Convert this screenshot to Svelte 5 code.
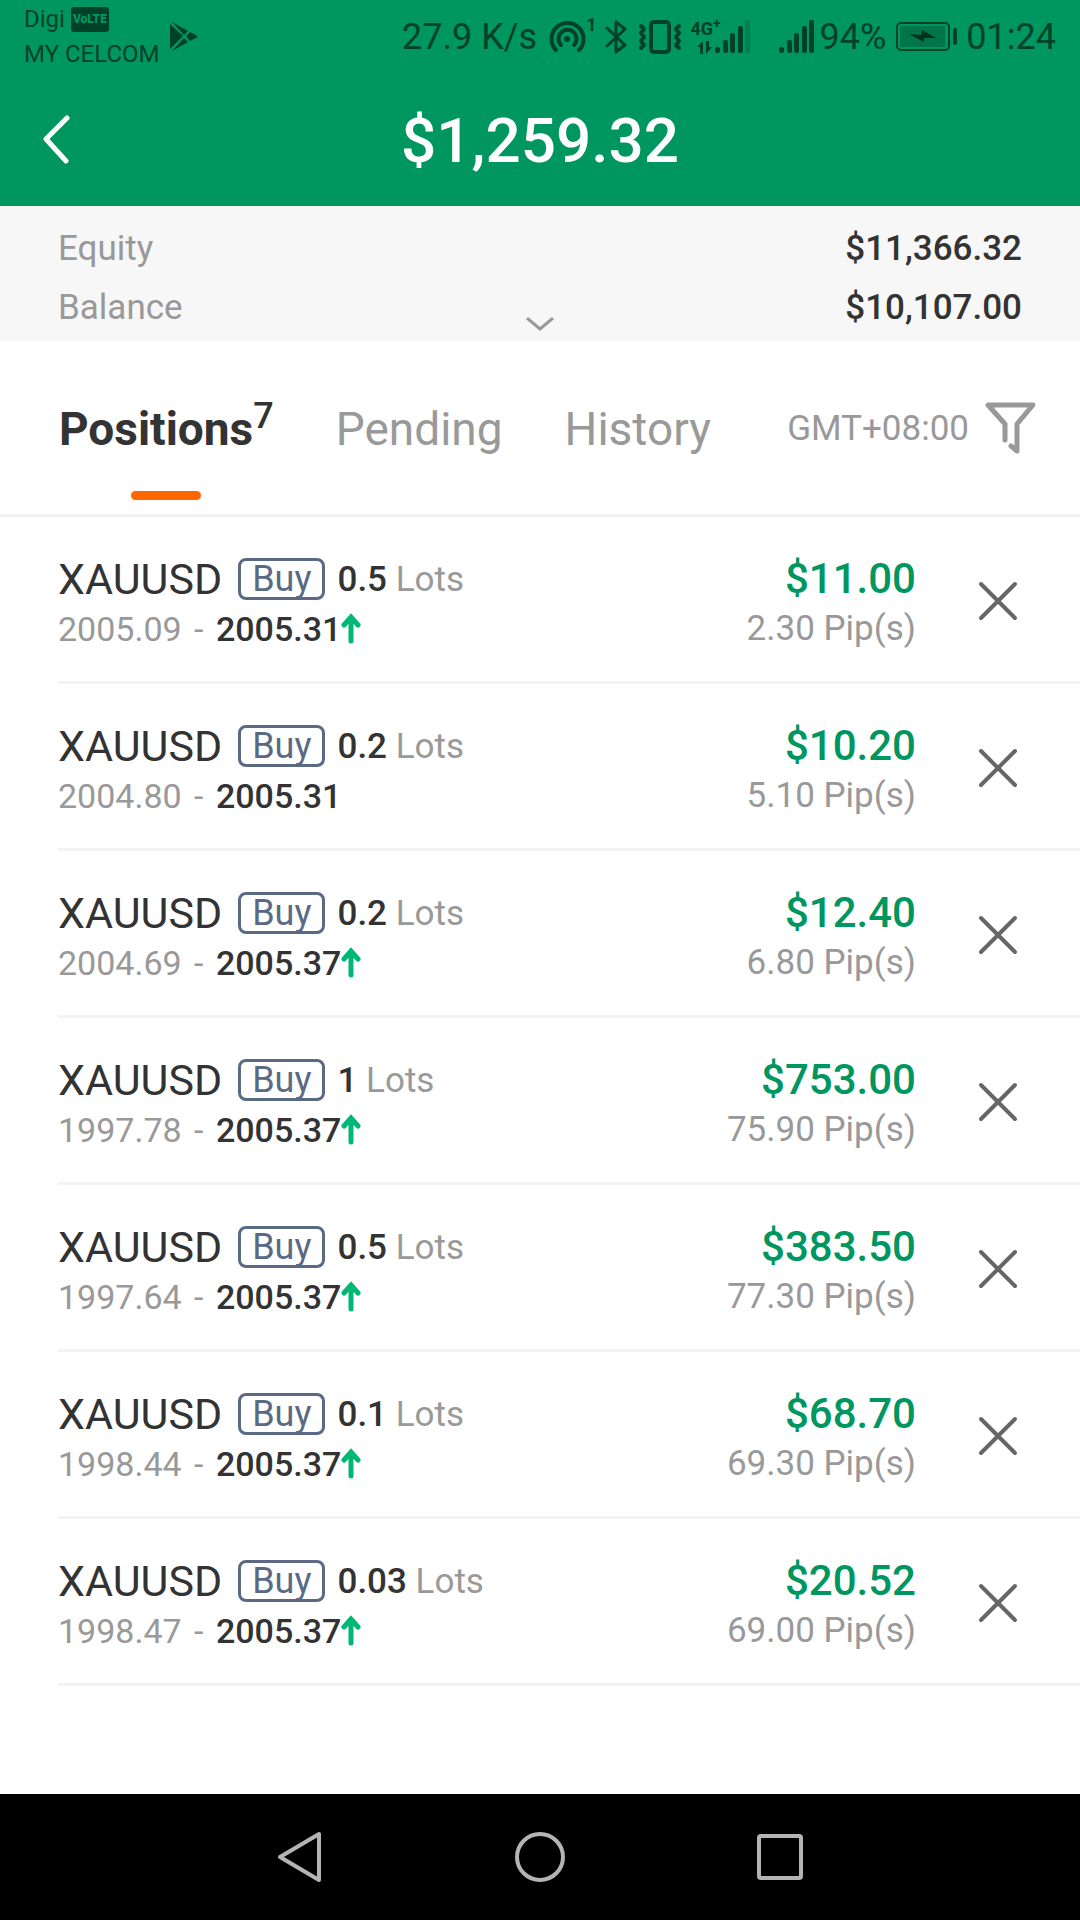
<script lang="ts">
  type Position = {
    lots: string;
    open: string;
    current: string;
    up: boolean;
    profit: string;
    pips: string;
  };

  const positions: Position[] = [
    { lots: '0.5', open: '2005.09', current: '2005.31', up: true, profit: '$11.00', pips: '2.30' },
    { lots: '0.2', open: '2004.80', current: '2005.31', up: false, profit: '$10.20', pips: '5.10' },
    { lots: '0.2', open: '2004.69', current: '2005.37', up: true, profit: '$12.40', pips: '6.80' },
    { lots: '1', open: '1997.78', current: '2005.37', up: true, profit: '$753.00', pips: '75.90' },
    { lots: '0.5', open: '1997.64', current: '2005.37', up: true, profit: '$383.50', pips: '77.30' },
    { lots: '0.1', open: '1998.44', current: '2005.37', up: true, profit: '$68.70', pips: '69.30' },
    { lots: '0.03', open: '1998.47', current: '2005.37', up: true, profit: '$20.52', pips: '69.00' }
  ];

  const tabs = ['Positions', 'Pending', 'History'];
  let active = $state('Positions');
</script>

{#snippet bars(full: boolean)}
  <svg class="bars" width="36" height="34" viewBox="0 0 36 34" aria-hidden="true">
    <rect x="0" y="27" width="5" height="6" rx="2" />
    <rect x="8" y="20" width="5" height="13" rx="2" />
    <rect x="15" y="13" width="5" height="20" rx="2" />
    <rect x="23" y="6" width="5" height="27" rx="2" />
    <rect x="30" y="0" width="5" height="33" rx="2" opacity={full ? 1 : 0.25} />
  </svg>
{/snippet}

<div class="app">
  <header>
    <div class="status">
      <div class="carriers">
        <div class="carrier">Digi <span class="volte">VoLTE</span></div>
        <div class="carrier">MY CELCOM</div>
      </div>
      <svg class="play" width="28" height="30" viewBox="0 0 28 30" aria-hidden="true">
        <path d="M0 2 13 14 0 27ZM2 0 18 9 14 13ZM20 10 26 13Q29 15 26 16L20 19 16 14ZM14 16 18 20 2 29Z" />
      </svg>
      <div class="indicators">
        <span class="speed">27.9 K/s</span>
        <svg width="37" height="34" viewBox="0 0 37 34" fill="none" stroke="currentColor" stroke-width="4" stroke-linecap="round" aria-hidden="true">
          <path d="M7 30A16 16 0 1 1 30 30M12 25A9 9 0 1 1 25 25" />
          <circle cx="18" cy="19" r="3" fill="currentColor" stroke="none" />
        </svg>
        <sup class="tiny">1</sup>
        <svg class="bt" width="22" height="36" viewBox="0 0 22 36" fill="none" stroke="currentColor" stroke-width="3" stroke-linejoin="round" stroke-linecap="round" aria-hidden="true">
          <path d="M2 9 20 26 11 33V3L20 10 2 27" />
        </svg>
        <svg class="vib" width="42" height="34" viewBox="0 0 42 34" fill="none" stroke="currentColor" stroke-linecap="round" stroke-linejoin="round" aria-hidden="true">
          <rect x="12" y="2" width="18" height="30" rx="3" stroke-width="4" />
          <path d="M2 6 5 9 2 13 5 17 2 21 5 25 2 28M40 6 37 9 40 13 37 17 40 21 37 25 40 28" stroke-width="4" />
        </svg>
        <span class="network">
          <span class="tiny">4G<sup>+</sup></span>
          <svg width="15" height="13" viewBox="0 0 15 13" aria-hidden="true">
            <path d="M3 13V6H0L6 0V13ZM9 0H12V6L15 6 9 13Z" />
          </svg>
        </span>
        {@render bars(false)}
        <span class="second">{@render bars(true)}</span>
        <span class="percent">94%</span>
        <svg class="battery" width="61" height="30" viewBox="0 0 61 30" aria-hidden="true">
          <rect x="1" y="1" width="52" height="27" rx="4" fill="none" stroke="currentColor" stroke-width="2" />
          <rect x="4" y="4" width="45" height="21" fill="#007549" />
          <path d="M13 12 25 13 26 8 40 16 28 16 28 20Z" fill="#00301c" />
          <rect x="57" y="6" width="4" height="17" rx="2" />
        </svg>
        <time>01:24</time>
      </div>
    </div>
    <div class="title">
      <button class="back" aria-label="Back">
        <svg width="28" height="50" viewBox="0 0 28 50" fill="none" stroke="currentColor" stroke-width="5" stroke-linecap="round" stroke-linejoin="round">
          <path d="M25 3 4 24 24 46" />
        </svg>
      </button>
      <h1>$1,259.32</h1>
    </div>
  </header>

  <section class="summary">
    <dl>
      <div><dt>Equity</dt><dd>$11,366.32</dd></div>
      <div><dt>Balance</dt><dd>$10,107.00</dd></div>
    </dl>
    <button class="expand" aria-label="Show account details">
      <svg width="28" height="14" viewBox="0 0 28 14" fill="none" stroke="currentColor" stroke-width="3">
        <path d="M1 1 14 12 27 1" />
      </svg>
    </button>
  </section>

  <nav class="tabs">
    {#each tabs as tab (tab)}
      <button class="tab" class:active={active === tab} onclick={() => (active = tab)}>
        {tab}{#if tab === 'Positions'}<sup>{positions.length}</sup>{/if}
      </button>
    {/each}
    <button class="filter" aria-label="Filter, GMT+08:00">
      <span>GMT+08:00</span>
      <svg width="52" height="54" viewBox="0 0 52 54" fill="none" stroke="currentColor" stroke-width="5" stroke-linecap="round" stroke-linejoin="round">
        <path d="M21 38V22L4 3H49L33 22V49L27 44" />
      </svg>
    </button>
  </nav>

  <ul>
    {#each positions as p}
      <li>
        <div class="deal">
          <div class="line">
            <span class="symbol">XAUUSD</span>
            <span class="side">Buy</span>
            <span class="lots"><b>{p.lots}</b> Lots</span>
          </div>
          <div class="line prices">
            <span>{p.open} <span class="dash">-</span> <b>{p.current}</b></span>
            {#if p.up}
              <svg width="20" height="32" viewBox="0 0 20 32" fill="none" stroke="#00b876" stroke-width="5" stroke-linecap="round" aria-label="up">
                <path d="M10 28V6M3 12 10 4 17 12" />
              </svg>
            {/if}
          </div>
        </div>
        <div class="result">
          <div class="profit">{p.profit}</div>
          <div class="pips">{p.pips} Pip(s)</div>
        </div>
        <button class="close" aria-label="Close position">
          <svg width="40" height="40" viewBox="0 0 40 40" fill="none" stroke="currentColor" stroke-width="4" stroke-linecap="round">
            <path d="M3 3 37 37M37 3 3 37" />
          </svg>
        </button>
      </li>
    {/each}
  </ul>

  <footer>
    <button aria-label="System back">
      <svg width="50" height="52" viewBox="0 0 50 52">
        <path d="M44 3V49L5 26Z" />
      </svg>
    </button>
    <button aria-label="Home">
      <svg width="50" height="52" viewBox="0 0 50 52">
        <circle cx="25" cy="26" r="23" />
      </svg>
    </button>
    <button aria-label="Recent apps">
      <svg width="50" height="52" viewBox="0 0 50 52">
        <rect x="4" y="5" width="42" height="42" rx="2" />
      </svg>
    </button>
  </footer>
</div>

<style>
  :global(body) {
    margin: 0;
    background: #fff;
  }
  .app {
    min-height: 100vh;
    display: flex;
    flex-direction: column;
    font-family: Roboto, "Liberation Sans", sans-serif;
    font-size: 36px;
    color: #333;
  }
  button {
    display: flex;
    align-items: center;
    padding: 0;
    border: 0;
    background: none;
    color: inherit;
    font: inherit;
    cursor: pointer;
  }
  svg {
    display: block;
    flex: none;
  }
  b {
    font-weight: 500;
    color: #333;
  }
  header {
    background: #00965f;
    color: #fff;
  }
  .status {
    display: flex;
    align-items: center;
    height: 74px;
    padding: 0 24px;
    color: #004229;
  }
  .status svg {
    overflow: visible;
  }
  .play,
  .bars,
  .battery > rect:last-child,
  .network svg {
    fill: currentColor;
  }
  .carrier {
    display: flex;
    align-items: center;
    gap: 6px;
    height: 35px;
    font-size: 24px;
    line-height: 35px;
  }
  .volte {
    padding: 0 2px;
    border-radius: 3px;
    background: #004229;
    color: #00965f;
    font-size: 12px;
    font-weight: 900;
    line-height: 25px;
  }
  .play {
    margin-left: 10px;
  }
  .indicators {
    display: flex;
    align-items: center;
    margin-left: auto;
  }
  .speed {
    margin-right: 12px;
  }
  .tiny {
    align-self: flex-start;
    font-size: 18px;
    font-weight: 700;
    line-height: 18px;
  }
  .tiny sup {
    font-size: 14px;
    line-height: 0;
  }
  .bt {
    margin-left: 8px;
  }
  .vib {
    margin: 0 10px 0 12px;
  }
  .network {
    display: flex;
    flex-direction: column;
    width: 24px;
    height: 34px;
    justify-content: space-between;
  }
  .network svg {
    margin-left: 6px;
  }
  .second {
    margin-left: 28px;
  }
  .percent {
    margin: 0 10px 0 5px;
  }
  .battery {
    margin-right: 9px;
  }
  .title {
    display: grid;
    grid-template-columns: 1fr auto 1fr;
    align-items: center;
    height: 132px;
    padding: 0 42px;
  }
  h1 {
    margin: 0;
    font-size: 62px;
    font-weight: 500;
  }
  .summary {
    position: relative;
    padding: 13px 58px 4px;
    background: #f7f7f7;
  }
  dl {
    margin: 0;
  }
  dl div {
    display: flex;
    justify-content: space-between;
    font-size: 35px;
    line-height: 59px;
  }
  dt {
    color: #999;
  }
  dd {
    margin: 0;
    font-weight: 500;
  }
  .expand {
    position: absolute;
    bottom: 10px;
    left: 50%;
    transform: translateX(-50%);
    color: #999;
  }
  .tabs {
    display: flex;
    gap: 62px;
    box-sizing: border-box;
    height: 176px;
    padding: 2px 44px 0 59px;
    border-bottom: 3px solid #f3f3f3;
    color: #999;
  }
  .tab {
    position: relative;
    font-size: 46px;
  }
  .tab.active {
    font-weight: 700;
    color: #333;
  }
  .tab.active::after {
    content: "";
    position: absolute;
    bottom: 14px;
    left: 50%;
    width: 70px;
    height: 9px;
    margin-left: -35px;
    border-radius: 5px;
    background: #ff6600;
  }
  .tab sup {
    align-self: flex-start;
    margin-top: 52px;
    font-size: 36px;
    font-weight: 500;
  }
  .filter {
    gap: 15px;
    margin-left: auto;
    font-size: 35px;
  }
  ul {
    flex: 1;
    margin: 0;
    padding: 0 0 108px;
    list-style: none;
  }
  li {
    display: flex;
    align-items: center;
    box-sizing: border-box;
    height: 167px;
    margin-left: 58px;
    padding: 4px 62px 0 0;
    border-bottom: 3px solid #f3f3f3;
  }
  .deal,
  .result {
    padding-top: 6px;
  }
  .line {
    display: flex;
    align-items: center;
    height: 50px;
  }
  .symbol {
    font-size: 43px;
  }
  .side {
    margin: 0 12px 0 16px;
    padding: 0 11px;
    border: 3px solid #5a6a85;
    border-radius: 8px;
    color: #5a6a85;
    line-height: 36px;
  }
  .lots,
  .pips {
    font-size: 35px;
    color: #999;
  }
  .prices {
    font-size: 34px;
    color: #999;
  }
  .dash {
    padding: 0 4px;
  }
  .result {
    margin-left: auto;
    text-align: right;
    line-height: 50px;
  }
  .profit {
    font-size: 42px;
    font-weight: 500;
    color: #00965f;
  }
  .close {
    margin-left: 62px;
    color: #666;
  }
  footer {
    display: flex;
    justify-content: center;
    gap: 190px;
    height: 126px;
    background: #000;
  }
  footer svg {
    fill: none;
    stroke: #b4b4b4;
    stroke-width: 4;
    stroke-linejoin: round;
  }
</style>
